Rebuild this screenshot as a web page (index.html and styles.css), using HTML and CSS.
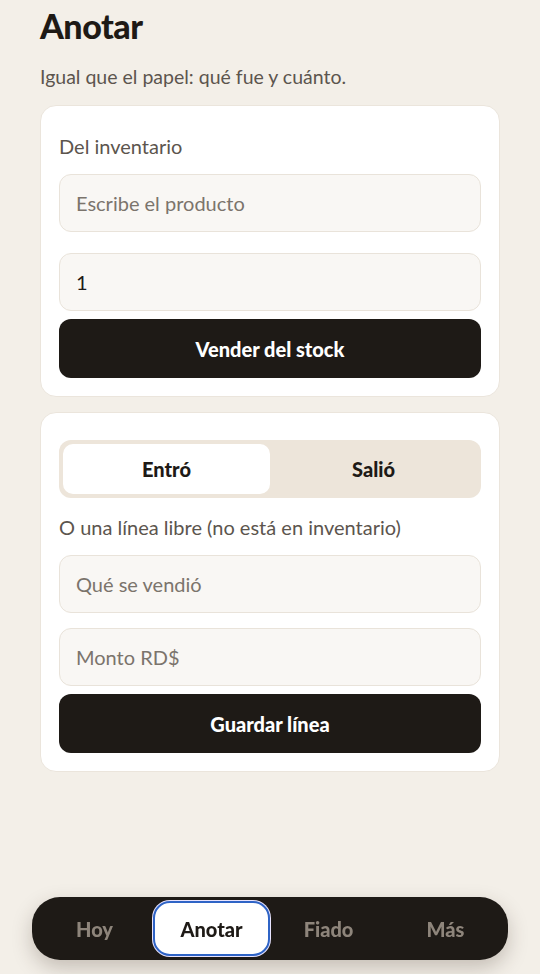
FILE: index.html
```html
<!DOCTYPE html>
<html lang="es">
<head>
    <meta charset="UTF-8">
    <meta name="viewport" content="width=device-width, initial-scale=1.0">
    <title>Anotar</title>
    <link rel="stylesheet" href="styles.css">
</head>
<body>
    <main class="page">
        <h1 class="title">Anotar</h1>
        <p class="subtitle">Igual que el papel: qué fue y cuánto.</p>

        <section class="card">
            <label class="card-label" for="producto">Del inventario</label>
            <input class="field" type="text" id="producto" placeholder="Escribe el producto">
            <input class="field field-qty" type="text" id="cantidad" value="1">
            <button class="btn-dark" type="button">Vender del stock</button>
        </section>

        <section class="card">
            <div class="segmented">
                <button class="seg-item active" type="button">Entró</button>
                <button class="seg-item" type="button">Salió</button>
            </div>
            <label class="card-label" for="concepto">O una línea libre (no está en inventario)</label>
            <input class="field" type="text" id="concepto" placeholder="Qué se vendió">
            <input class="field field-monto" type="text" id="monto" placeholder="Monto RD$">
            <button class="btn-dark" type="button">Guardar línea</button>
        </section>
    </main>

    <nav class="tabbar">
        <a class="tab" href="#">Hoy</a>
        <a class="tab active" href="#">Anotar</a>
        <a class="tab" href="#">Fiado</a>
        <a class="tab" href="#">Más</a>
    </nav>
</body>
</html>
```

FILE: styles.css
```css
* {
    box-sizing: border-box;
}
body {
    margin: 0;
    background-color: #f3efe8;
    font-family: Lato, "Noto Sans", sans-serif;
    color: #1e1a16;
    height: 974px;
    overflow: hidden;
}
.page {
    padding: 0 40px;
}
.title {
    margin: 6px 0 0;
    font-size: 34px;
    line-height: 40px;
    font-weight: 900;
    letter-spacing: -0.5px;
}
.subtitle {
    margin: 18px 0 0;
    font-size: 19.5px;
    line-height: 26px;
    color: #5c554e;
}
.card {
    display: flex;
    flex-direction: column;
    margin-top: 15px;
    padding: 27px 18px 18px 18px;
    background: #fff;
    border: 1px solid #ebe5dc;
    border-radius: 16px;
}
.card-label {
    font-size: 20px;
    line-height: 26px;
    color: #5c554e;
    margin-bottom: 15px;
}
.field {
    height: 58px;
    padding: 0 16px;
    font-family: inherit;
    font-size: 20px;
    color: #1e1a16;
    background: #f9f7f4;
    border: 1px solid #e9e3da;
    border-radius: 12px;
    outline: none;
}
.field::placeholder {
    color: #7b746c;
}
.field-qty {
    margin-top: 21px;
}
.field-monto {
    margin-top: 15px;
}
.btn-dark {
    margin-top: 8px;
    height: 59px;
    font-family: inherit;
    font-size: 20px;
    font-weight: 900;
    color: #fff;
    background: #1e1a16;
    border: none;
    border-radius: 12px;
}
.segmented {
    display: grid;
    grid-template-columns: 1fr 1fr;
    height: 58px;
    padding: 4px;
    background: #ede5da;
    border-radius: 12px;
    margin-bottom: 16px;
}
.seg-item {
    font-family: inherit;
    font-size: 20px;
    font-weight: 900;
    color: #1e1a16;
    background: transparent;
    border: none;
    border-radius: 10px;
}
.seg-item.active {
    background: #fff;
}
.tabbar {
    position: fixed;
    left: 32px;
    right: 32px;
    bottom: 14px;
    height: 63px;
    display: grid;
    grid-template-columns: repeat(4, 1fr);
    padding: 4px;
    background: #1e1a16;
    border-radius: 28px;
    box-shadow: 0 8px 20px rgba(60, 45, 30, 0.25);
}
.tab {
    display: flex;
    align-items: center;
    justify-content: center;
    font-size: 20px;
    font-weight: 900;
    color: #8e857b;
    text-decoration: none;
    border-radius: 17px;
}
.tab.active {
    color: #1e1a16;
    background: #fff;
    border: 2px solid #2f64c6;
    box-shadow: inset 0 0 0 1px #fff, 0 0 0 1px #e8e4ff;
}
```
